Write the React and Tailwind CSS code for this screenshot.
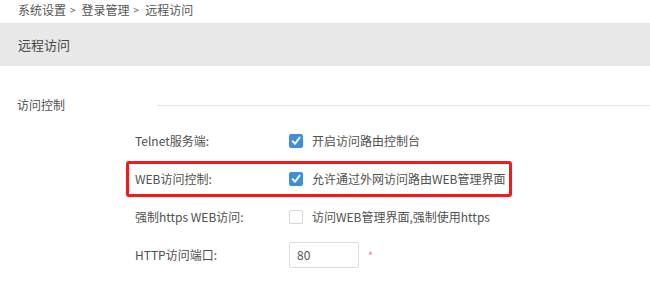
import React from 'react';

const font = { fontFamily: '"Noto Sans CJK SC", "Noto Sans", sans-serif' };

function Check({ on }) {
  if (!on) {
    return <span className="w-[14px] h-[14px] shrink-0 rounded-[2px] border border-[#d4d4d4] bg-white" />;
  }
  return (
    <span className="w-[14px] h-[14px] shrink-0 rounded-[2px] bg-[#3d8fdc] flex items-center justify-center">
      <svg width="10" height="10" viewBox="0 0 10 10">
        <path d="M1.6 5.2 L4 7.8 L8.6 1.6" fill="none" stroke="#fff" strokeWidth="1.9" strokeLinecap="round" strokeLinejoin="round" />
      </svg>
    </span>
  );
}

function Row({ label, marked, children }) {
  return (
    <div
      className={
        'ml-[126px] w-[386px] h-[36px] my-[2px] border-[3px] rounded-[3px] pl-[6px] flex items-center ' +
        (marked ? 'border-[#f51a1a]' : 'border-transparent')
      }
    >
      <span className="w-[154px] shrink-0 text-[12px] text-[#505050]">{label}</span>
      {children}
    </div>
  );
}

export default function App() {
  return (
    <div className="w-[650px] h-[285px] bg-white overflow-hidden" style={font}>
      {/* breadcrumb */}
      <div className="h-[23px] pl-[18px] pt-[2px] text-[12px] leading-[16px] text-[#555] flex">
        <span>系统设置</span>
        <span className="ml-[4px] mr-[6px] text-[10px]">&gt;</span>
        <span>登录管理</span>
        <span className="ml-[4px] mr-[6px] text-[10px]">&gt;</span>
        <span>远程访问</span>
      </div>

      {/* page title */}
      <div className="h-[43px] bg-[#e8e8e8] pl-[18px] flex items-center text-[13px] text-[#444]">
        远程访问
      </div>

      {/* section */}
      <div className="pt-[31px] h-[16px] box-content flex items-center pl-[17px]">
        <span className="text-[12px] text-[#505050]">访问控制</span>
        <div className="ml-[92px] flex-1 h-px bg-[#e4e4e4]" />
      </div>

      <div className="pt-[8px]">
        <Row label="Telnet服务端:">
          <Check on />
          <span className="ml-[9px] text-[12px] text-[#505050]">开启访问路由控制台</span>
        </Row>
        <Row label="WEB访问控制:" marked>
          <Check on />
          <span className="ml-[9px] text-[12px] text-[#505050]">允许通过外网访问路由WEB管理界面</span>
        </Row>
        <Row label="强制https WEB访问:">
          <Check on={false} />
          <span className="ml-[9px] text-[12px] text-[#505050]">访问WEB管理界面,强制使用https</span>
        </Row>
        <Row label="HTTP访问端口:">
          <div className="w-[70px] h-[26px] shrink-0 border border-[#dcdcdc] rounded-[2px] pl-[7px] flex items-center text-[12px] text-[#505050]">
            80
          </div>
          <span className="ml-[9px] text-[11px] text-[#f47c8a]">*</span>
        </Row>
      </div>
    </div>
  );
}
